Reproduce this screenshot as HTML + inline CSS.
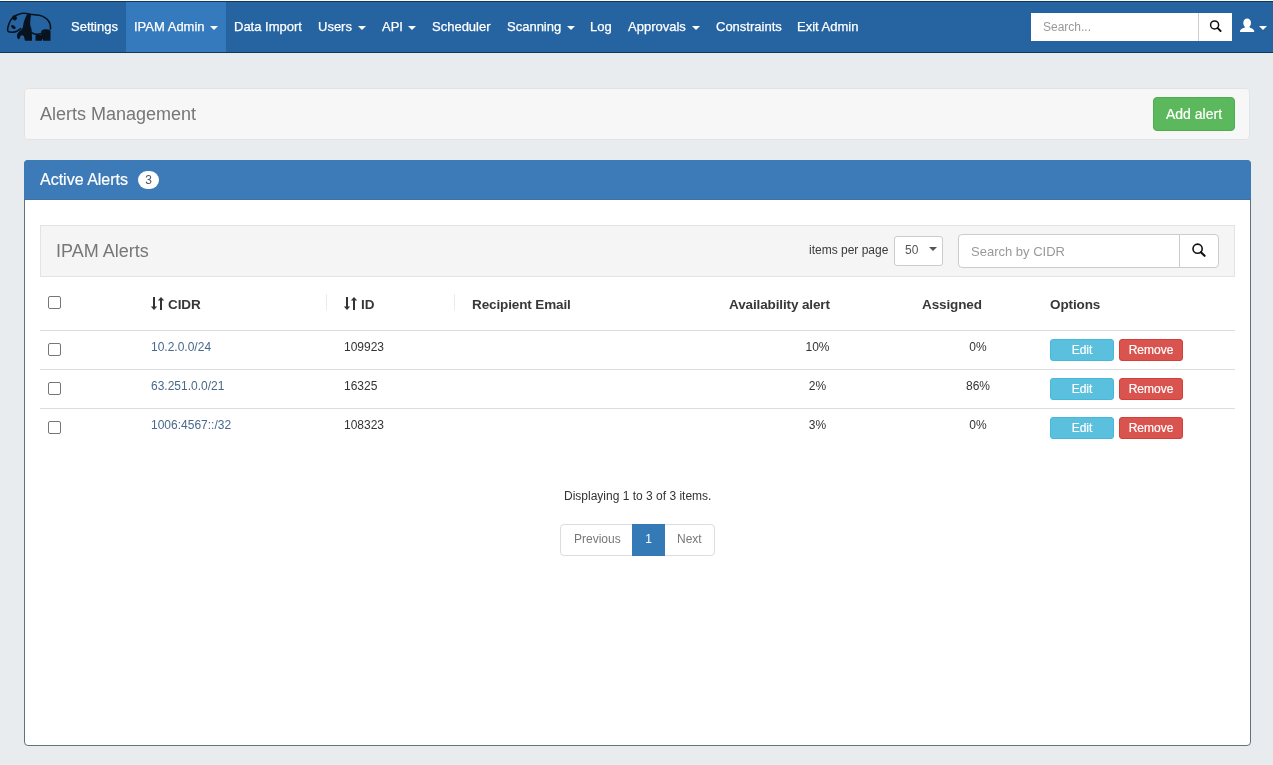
<!DOCTYPE html>
<html><head><meta charset="utf-8">
<style>
*{box-sizing:border-box}
html,body{margin:0;padding:0}
body{width:1273px;height:765px;overflow:hidden;background:#e9ecef;font-family:"Liberation Sans",sans-serif;position:relative;color:#333}
.a{position:absolute;white-space:nowrap}
#topline{left:0;top:0;width:1273px;height:1px;background:#f4fbff}
#nav{left:0;top:1px;width:1273px;height:52px;background:#2564a1;border-top:1px solid #153659;border-bottom:1px solid #153659}
#active{left:126px;top:2px;width:100px;height:50px;background:#357abd}
.nt{font-size:13px;color:#fff;line-height:15px;top:19px;-webkit-text-stroke:0.25px #fff}
.caret{position:absolute;width:0;height:0;border-left:4px solid transparent;border-right:4px solid transparent;border-top:4px solid #fff}
#nsearch{left:1031px;top:13px;width:201px;height:28px;background:#fff}
#nsearch .sep{position:absolute;left:167px;top:0;width:1px;height:28px;background:#ccc}
.well{background:#f7f7f7;border:1px solid #e3e3e3;border-radius:4px}
#well1{left:24px;top:88px;width:1226px;height:52px}
#addbtn{left:1153px;top:97px;width:82px;height:34px;background:#5cb85c;border:1px solid #4cae4c;border-radius:4px}
#panel{left:24px;top:160px;width:1227px;height:586px;background:#fff;border:1px solid #5f7380;border-radius:4px}
#phead{left:-1px;top:-1px;width:1227px;height:40px;background:#3d7ab8;border-radius:4px 4px 0 0;border-bottom:1px solid #44709f}
#well2{left:40px;top:225px;width:1195px;height:52px;background:#f5f5f5;border:1px solid #e3e3e3}
.hl{left:40px;width:1195px;height:1px;background:#ddd}
.cb{width:13px;height:13px;border:1px solid #767676;border-radius:2px;background:#fff}
.th{font-size:13.5px;letter-spacing:-0.12px;font-weight:bold;color:#383838;line-height:15px}
.td{font-size:12px;color:#333;line-height:14px}
.lk{color:#48698c}
.btn{-webkit-text-stroke:0.2px #fff;font-size:12px;color:#fff;line-height:14px;text-align:center;border-radius:3px;width:64px;height:22px;padding-top:3px}
.edit{background:#5bc0de;border:1px solid #46b8da}
.rem{background:#d9534f;border:1px solid #d43f3a}
</style></head><body><div style="position:absolute;left:0;top:0;width:1273px;height:765px;will-change:transform">
<div class="a" id="topline"></div>
<div class="a" id="nav"></div>
<div class="a" id="active"></div>
<!-- panda -->
<svg class="a" style="left:0;top:0" width="60" height="52" viewBox="0 0 60 52">
 <g fill="none" stroke="#08131f" stroke-width="1.6" stroke-linecap="round" stroke-linejoin="round">
  <path d="M15.2 15.8 C18 14.5 20.5 13.4 22.8 13.3 C25 13.2 27 13.4 28.5 13.8 L30.7 14.2 C34 14.5 36.5 14.9 39.1 15.3 C41.5 15.8 43.5 16.7 44.9 17.6 C46.5 18.6 47.7 19.6 48.4 20.7 C49.5 22.3 50 23.5 50.2 24.7 C50.5 26 50.5 27.5 50.4 29"/>
  <path d="M12.3 18 C11 19.5 10 21.5 9.2 23.3 C8.5 25 8 27 7.7 28.7 C7.5 30 7.6 30.8 8.1 31.3 C9.5 32.3 11 32.3 12.6 32.2 C14.5 32 16 31.5 17.4 30.9 C18.5 30.3 19.3 29.6 20.6 28.7"/>
  <path d="M31.6 32.7 C33 33.4 34.5 34 36 34.2 C38 34.3 40 34 41.3 33.6"/>
 </g>
 <g fill="#08131f">
  <ellipse cx="14.5" cy="17.9" rx="2.6" ry="2.2" transform="rotate(45 14.5 17.9)"/>
  <path d="M11.2 25.4 C11.8 24.6 13.2 24.9 14.3 25.7 C15.4 26.5 15.9 27.8 15.5 28.6 C15.1 29.2 13.9 29 12.8 28.4 C11.7 27.8 10.8 26.4 11.2 25.4 Z"/>
  <path d="M26.9 13.8 L31.2 14.2 C30.7 17 30.2 20.5 30.2 23.3 C30 25.5 31 27.5 31.5 29 C31.9 32 32 36.5 32 40.8 L25 40.8 C24.6 39.5 24.4 37.5 23.8 36 C23 35.3 22.2 35 21.3 35.3 C20.5 36.3 20 37.5 19.5 38.5 C19.2 39.2 18.7 39.5 18.3 39.3 C17.4 38.5 17 37 17 35.8 C17.1 34.5 17.5 33.3 18.5 32.3 C19.8 31 21 30.2 22.3 28.6 C23 27.2 23.3 25 23.7 22.4 C24.5 19.5 25.8 16.5 27.2 13.9 Z"/>
  <path d="M41.2 31.5 C41.8 30.2 43.2 29.4 45 29.3 C47 29.3 49 29.6 50.4 30.4 C50.6 33.5 50.6 37.5 50.4 40.8 L43.2 40.8 C43 39.8 42.8 39 42.6 38.5 C42.3 39.2 42 40 41.8 40.8 L35.6 40.8 C35.5 38.5 35.5 36.5 35.7 35 L41.3 34.8 Z"/>
 </g>
</svg>
<div class="a nt" style="left:71px">Settings</div>
<div class="a nt" style="left:134px">IPAM Admin</div><div class="caret" style="left:210px;top:26px"></div>
<div class="a nt" style="left:234px">Data Import</div>
<div class="a nt" style="left:318px">Users</div><div class="caret" style="left:358px;top:26px"></div>
<div class="a nt" style="left:382px">API</div><div class="caret" style="left:408px;top:26px"></div>
<div class="a nt" style="left:432px">Scheduler</div>
<div class="a nt" style="left:507px">Scanning</div><div class="caret" style="left:567px;top:26px"></div>
<div class="a nt" style="left:590px">Log</div>
<div class="a nt" style="left:628px">Approvals</div><div class="caret" style="left:692px;top:26px"></div>
<div class="a nt" style="left:716px">Constraints</div>
<div class="a nt" style="left:797px">Exit Admin</div>

<div class="a" id="nsearch"><div class="sep"></div></div>
<div class="a" style="left:1043px;top:20px;font-size:12px;line-height:14px;color:#999">Search...</div>
<svg class="a" style="left:1207px;top:18px" width="18" height="18" viewBox="0 0 18 18">
 <circle cx="7.6" cy="6.9" r="4.0" fill="none" stroke="#111" stroke-width="1.5"/>
 <path d="M10.5 9.9 L13.6 13" stroke="#111" stroke-width="1.9" stroke-linecap="round"/>
</svg>
<svg class="a" style="left:1238px;top:16px" width="18" height="18" viewBox="0 0 18 18">
 <path d="M9.15 2.5 C11.4 2.5 13 4.3 13 6.8 C13 8.6 12.3 10 11.4 10.8 L11.4 11.8 L6.9 11.8 L6.9 10.8 C6 10 5.3 8.6 5.3 6.8 C5.3 4.3 6.9 2.5 9.15 2.5 Z" fill="#fff"/>
 <path d="M1.9 16.1 C2 14.6 2.6 13.4 4.2 12.6 C5.2 12.1 6.2 11.7 7 11.2 L11.3 11.2 C12.1 11.7 13.1 12.1 14.1 12.6 C15.7 13.4 16.2 14.6 16.3 16.1 Z" fill="#fff"/>
</svg>
<div class="caret" style="left:1259px;top:26px"></div>

<div class="a well" id="well1"></div>
<div class="a" style="left:40px;top:104px;font-size:18px;line-height:20px;color:#777">Alerts Management</div>
<div class="a" id="addbtn"></div>
<div class="a" style="left:1166px;top:106px;font-size:14px;line-height:16px;color:#fff;-webkit-text-stroke:0.2px #fff">Add alert</div>

<div class="a" id="panel"><div class="a" id="phead"></div></div>
<div class="a" style="left:40px;top:171px;font-size:16px;line-height:18px;color:#fff;-webkit-text-stroke:0.2px #fff">Active Alerts</div>
<div class="a" style="left:138px;top:171px;width:21px;height:18px;border-radius:9px;background:#fff;color:#4a5866;font-size:12px;line-height:18px;text-align:center">3</div>

<div class="a" id="well2"></div>
<div class="a" style="left:56px;top:241px;font-size:18px;line-height:20px;color:#777">IPAM Alerts</div>
<div class="a" style="left:809px;top:243px;font-size:12px;line-height:14px;color:#3a3a3a">items per page</div>
<div class="a" style="left:894px;top:236px;width:49px;height:30px;background:#fff;border:1px solid #ccc;border-radius:3px"></div>
<div class="a" style="left:905px;top:243px;font-size:12px;line-height:14px;color:#555">50</div>
<div class="caret" style="left:929px;top:247px;border-top-color:#555"></div>
<div class="a" style="left:958px;top:234px;width:261px;height:34px;background:#fff;border:1px solid #ccc;border-radius:4px"></div>
<div class="a" style="left:1179px;top:235px;width:1px;height:32px;background:#ccc"></div>
<div class="a" style="left:971px;top:244px;font-size:13px;line-height:15px;color:#999">Search by CIDR</div>
<svg class="a" style="left:1190px;top:242px" width="18" height="18" viewBox="0 0 18 18">
 <circle cx="7.6" cy="6.7" r="4.6" fill="none" stroke="#111" stroke-width="1.6"/>
 <path d="M10.9 10.2 L14.6 13.8" stroke="#111" stroke-width="2.2" stroke-linecap="round"/>
</svg>

<!-- table header -->
<div class="a cb" style="left:48px;top:296px"></div>
<svg class="a" style="left:150px;top:296px" width="16" height="15" viewBox="0 0 16 15">
 <g fill="#333"><rect x="3" y="1" width="2" height="10"/><path d="M0.8 10.5 H7.2 L4 14 Z"/><rect x="10" y="4" width="2" height="10"/><path d="M7.8 4.5 H14.2 L11 1 Z"/></g>
</svg>
<div class="a th" style="left:168px;top:297px">CIDR</div>
<div class="a" style="left:326px;top:294px;width:1px;height:16px;background:#ececec"></div>
<svg class="a" style="left:343px;top:296px" width="16" height="15" viewBox="0 0 16 15">
 <g fill="#333"><rect x="3" y="1" width="2" height="10"/><path d="M0.8 10.5 H7.2 L4 14 Z"/><rect x="10" y="4" width="2" height="10"/><path d="M7.8 4.5 H14.2 L11 1 Z"/></g>
</svg>
<div class="a th" style="left:361px;top:297px">ID</div>
<div class="a" style="left:454px;top:294px;width:1px;height:16px;background:#ececec"></div>
<div class="a th" style="left:472px;top:297px">Recipient Email</div>
<div class="a th" style="left:729px;top:297px">Availability alert</div>
<div class="a th" style="left:922px;top:297px">Assigned</div>
<div class="a th" style="left:1050px;top:297px">Options</div>
<div class="a hl" style="top:330px"></div>
<div class="a hl" style="top:369px"></div>
<div class="a hl" style="top:408px"></div>

<!-- rows -->
<div class="a cb" style="left:48px;top:343px"></div>
<div class="a td lk" style="left:151px;top:340px">10.2.0.0/24</div>
<div class="a td" style="left:344px;top:340px">109923</div>
<div class="a td" style="left:721px;width:193px;text-align:center;top:340px">10%</div>
<div class="a td" style="left:914px;width:128px;text-align:center;top:340px">0%</div>
<div class="a btn edit" style="left:1050px;top:339px">Edit</div>
<div class="a btn rem" style="left:1119px;top:339px">Remove</div>

<div class="a cb" style="left:48px;top:382px"></div>
<div class="a td lk" style="left:151px;top:379px">63.251.0.0/21</div>
<div class="a td" style="left:344px;top:379px">16325</div>
<div class="a td" style="left:721px;width:193px;text-align:center;top:379px">2%</div>
<div class="a td" style="left:914px;width:128px;text-align:center;top:379px">86%</div>
<div class="a btn edit" style="left:1050px;top:378px">Edit</div>
<div class="a btn rem" style="left:1119px;top:378px">Remove</div>

<div class="a cb" style="left:48px;top:421px"></div>
<div class="a td lk" style="left:151px;top:418px">1006:4567::/32</div>
<div class="a td" style="left:344px;top:418px">108323</div>
<div class="a td" style="left:721px;width:193px;text-align:center;top:418px">3%</div>
<div class="a td" style="left:914px;width:128px;text-align:center;top:418px">0%</div>
<div class="a btn edit" style="left:1050px;top:417px">Edit</div>
<div class="a btn rem" style="left:1119px;top:417px">Remove</div>

<div class="a td" style="left:564px;top:489px">Displaying 1 to 3 of 3 items.</div>

<div class="a" style="left:560px;top:524px;width:155px;height:32px;background:#fff;border:1px solid #ddd;border-radius:4px"></div>
<div class="a" style="left:632px;top:524px;width:33px;height:32px;background:#337ab7"></div>
<div class="a td" style="left:574px;top:532px;color:#777">Previous</div>
<div class="a td" style="left:632px;width:33px;text-align:center;top:532px;color:#fff">1</div>
<div class="a td" style="left:677px;top:532px;color:#777">Next</div>
</div></body></html>
